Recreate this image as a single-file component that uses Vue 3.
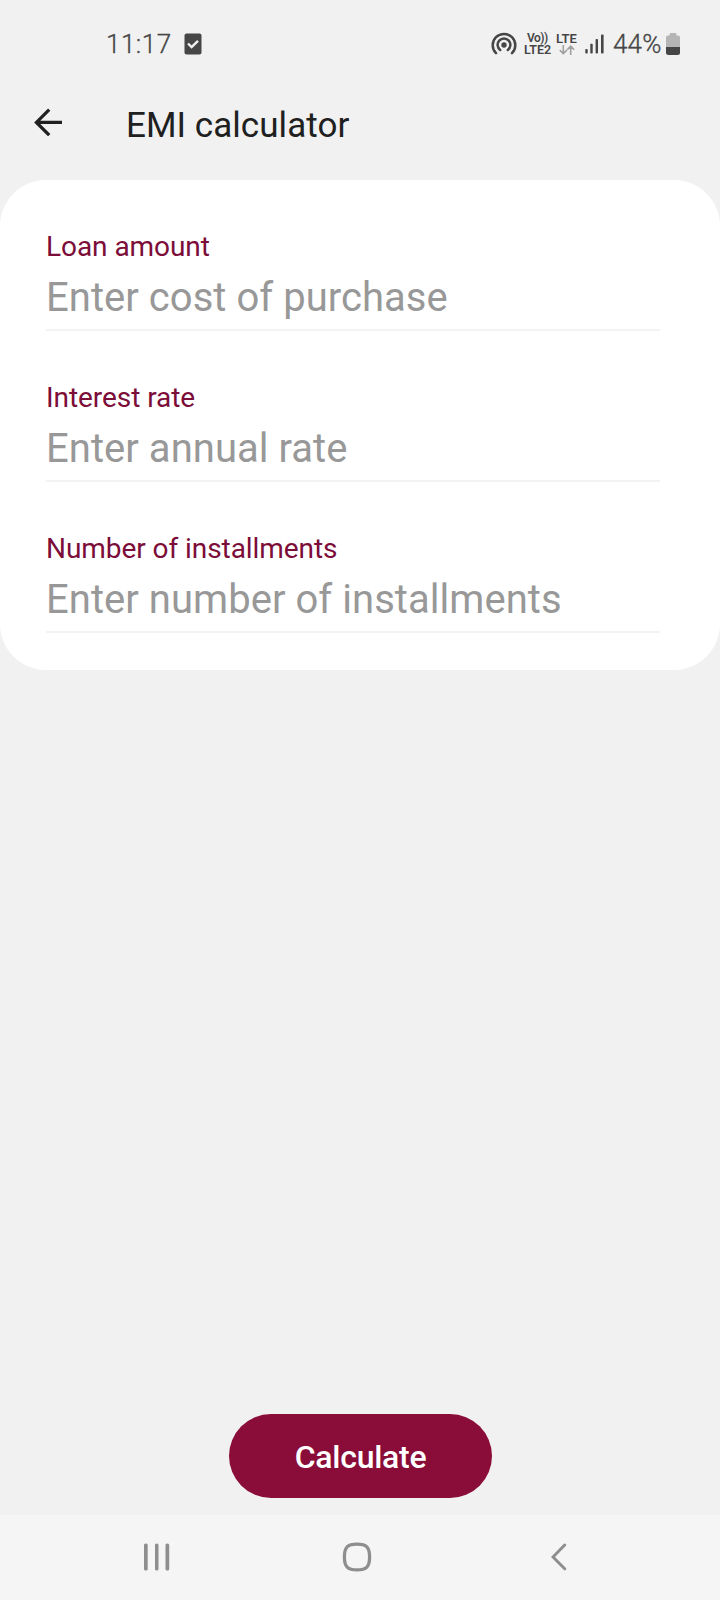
<script setup>
const fields = [
  { id: 'amount', label: 'Loan amount', hint: 'Enter cost of purchase' },
  { id: 'rate', label: 'Interest rate', hint: 'Enter annual rate' },
  { id: 'count', label: 'Number of installments', hint: 'Enter number of installments' },
]
</script>

<template>
  <div class="screen">
    <header class="status">
      <span class="clock">11:17</span>
      <svg class="task" width="18" height="22" viewBox="0 0 18 22">
        <rect x="0.5" y="0.5" width="17" height="21" rx="2" fill="#464646" />
        <path d="M4 10.5l3.6 3.6L14 7.8" fill="none" stroke="#f1f1f1" stroke-width="2.4" />
      </svg>
      <svg class="hotspot" width="26" height="24" viewBox="0 0 26 24" fill="none" stroke="#464646" stroke-width="2.5" stroke-linecap="round">
        <circle cx="13" cy="13" r="2.7" fill="#464646" stroke="none" />
        <path d="M9.2 18A6.4 6.4 0 1 1 16.8 18" />
        <path d="M5 21.2A11.3 11.3 0 1 1 21 21.2" />
      </svg>
      <div class="net volte"><span class="vo">Vo))</span><span>LTE2</span></div>
      <div class="net lte">
        <span>LTE</span>
        <svg width="16" height="10" viewBox="0 0 16 10" fill="none" stroke="#a0a0a0" stroke-width="1.6">
          <path d="M4.3 0v8.6M0.8 5.1l3.5 3.6 3.5-3.6M11.7 10V1.2M8.2 4.8l3.5-3.6 3.5 3.6" />
        </svg>
      </div>
      <svg class="signal" width="20" height="20" viewBox="0 0 20 20" fill="#464646">
        <rect x="0.3" y="15" width="2.4" height="4.5" rx="0.8" />
        <rect x="5.3" y="9.8" width="2.4" height="9.7" rx="0.8" />
        <rect x="10.6" y="5" width="2.4" height="14.5" rx="0.8" />
        <rect x="16" y="0.4" width="2.6" height="19.1" rx="0.8" />
      </svg>
      <span class="percent">44%</span>
      <svg class="battery" width="14" height="22" viewBox="0 0 14 22">
        <path d="M4.6 0h4.8q1 0 1 1v1.6H12q2 0 2 2V14H0V4.600q0-2 2-2h1.600V1q0-1 1-1z" fill="#b5b5b5" />
        <path d="M0 14h14v5.500q0 2.500-2.500 2.500h-9Q0 22 0 19.500z" fill="#464646" />
      </svg>
    </header>

    <div class="bar">
      <svg class="back" width="30" height="28" viewBox="0 0 30 28" fill="none" stroke="#202020" stroke-width="3.2">
        <path d="M29 14.400H3M16.200 1.600L3.400 14.400l12.800 12.800" />
      </svg>
      <h1>EMI calculator</h1>
    </div>

    <main class="card">
      <div v-for="f in fields" :key="f.id" class="field">
        <label :for="f.id">{{ f.label }}</label>
        <input :id="f.id" :placeholder="f.hint" />
      </div>
    </main>

    <button class="calc">Calculate</button>

    <nav class="nav">
      <svg width="26" height="28" viewBox="0 0 26 28" fill="#8e8e8e">
        <rect x="0" y="0.500" width="3.700" height="27" rx="1.600" />
        <rect x="11" y="0.500" width="3.500" height="27" rx="1.600" />
        <rect x="21.500" y="0.500" width="3.700" height="27" rx="1.600" />
      </svg>
      <svg class="home" width="30" height="30" viewBox="0 0 30 30" fill="none" stroke="#8e8e8e" stroke-width="3.300">
        <path d="M15 2.200C24.500 2.200 27.600 5.300 27.600 15S24.500 27.800 15 27.800 2.400 24.700 2.400 15 5.500 2.200 15 2.200z" />
      </svg>
      <svg class="prev" width="16" height="28" viewBox="0 0 16 28" fill="none" stroke="#8e8e8e" stroke-width="3" stroke-linecap="round">
        <path d="M13.700 2L2 14l11.700 11.800" />
      </svg>
    </nav>
  </div>
</template>

<style>
body { background: #f1f1f1; }
</style>

<style scoped>
.screen {
  box-sizing: border-box;
  width: 720px;
  height: 1600px;
  display: flex;
  flex-direction: column;
  background: #f1f1f1;
  font-family: Roboto, "Liberation Sans", sans-serif;
  overflow: hidden;
}
svg { display: block; flex: none; }
.status {
  height: 88px;
  display: flex;
  align-items: center;
  padding: 0 40px 0 106px;
  box-sizing: border-box;
  color: #464646;
  font-size: 26px;
  font-weight: 300;
}
.clock { width: 78px; letter-spacing: 0.5px; }
.clock, .percent { -webkit-text-stroke: 0.3px #464646; }
.hotspot { margin-left: 289px; }
.net {
  display: flex;
  flex-direction: column;
  font-size: 13px;
  font-weight: 600;
  line-height: 12px;
}
.volte { width: 30px; margin-left: 7px; font-size: 12.500px; }
.vo { padding-left: 3px; font-size: 12px; letter-spacing: -0.500px; }
.lte { width: 22px; margin-left: 2px; }
.lte svg { margin: 0 0 1px 3px; }
.signal { margin-left: 7px; }
.percent { width: 52px; margin-left: 8px; letter-spacing: 0.2px; }
.battery { margin-left: auto; }
.bar {
  height: 92px;
  display: flex;
  box-sizing: border-box;
  padding-left: 33px;
}
.back { margin-top: 20px; }
h1 {
  margin: 17px 0 0 63px;
  font-size: 35px;
  line-height: 41px;
  font-weight: 400;
  color: #202020;
  letter-spacing: 0.050px;
  white-space: nowrap;
}
.card {
  box-sizing: border-box;
  height: 490px;
  flex: none;
  background: #fff;
  border-radius: 46px;
  padding: 51px 60px 0 46px;
}
.field {
  height: 151px;
  display: flex;
  flex-direction: column;
}
label {
  font-size: 28px;
  line-height: 32px;
  letter-spacing: -0.060px;
  color: #7b0d38;
}
input {
  box-sizing: border-box;
  width: 100%;
  height: 68px;
  border: 0;
  border-bottom: 2px solid #f3f3f3;
  border-radius: 0;
  outline: 0;
  background: transparent;
  padding: 2px 0 0;
  font: 400 40px Roboto, "Liberation Sans", sans-serif;
  letter-spacing: 0.040px;
}
input::placeholder { color: #989898; opacity: 1; }
.calc {
  margin: auto auto 17px;
  width: 263px;
  height: 84px;
  flex: none;
  border: 0;
  border-radius: 42px;
  background: #8a0c38;
  color: #fff;
  font: 500 32px Roboto, "Liberation Sans", sans-serif;
  letter-spacing: -0.250px;
  padding: 1px 0 0 1px;
}
.nav {
  height: 85px;
  flex: none;
  display: flex;
  align-items: center;
  box-sizing: border-box;
  padding: 0 0 2px 144px;
  background: #f5f5f5;
}
.home { margin-left: 172px; }
.prev { margin-left: 179px; }
</style>
